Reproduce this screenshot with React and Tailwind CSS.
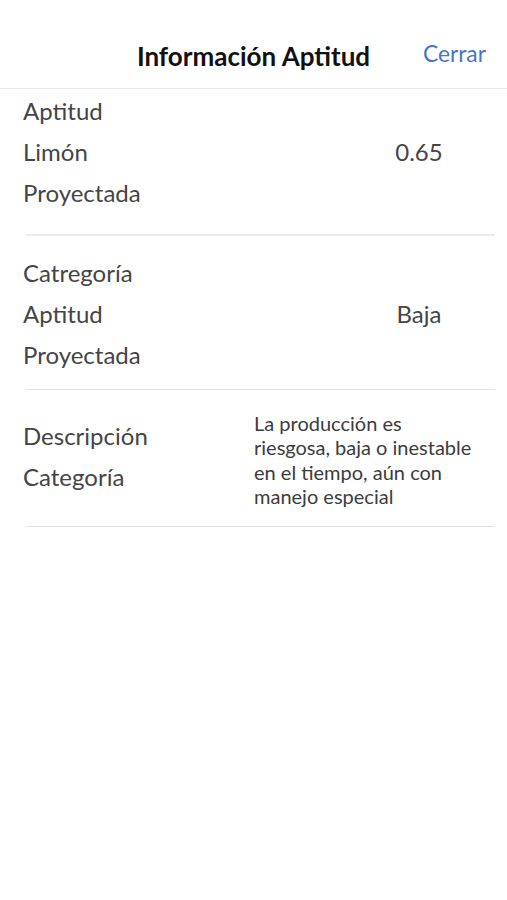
import React from "react";

export default function App() {
  const font = { fontFamily: "Lato, 'Noto Sans', sans-serif" };
  return (
    <div className="w-[507px] h-[900px] bg-white text-[#454545]" style={font}>
      <div className="relative h-[89px] border-b border-[#ececec] flex items-end justify-center pb-[19px]">
        <div className="text-[26px] font-bold text-[#111] leading-none">Información Aptitud</div>
        <div className="absolute right-[21px] top-[42px] text-[22.8px] leading-none text-[#4a75c2]">Cerrar</div>
      </div>

      <div className="flex items-center pt-[1px] pb-[21px]">
        <div className="w-[254px] pl-[23px] text-[24px] leading-[41px]">
          <div>Aptitud</div>
          <div>Limón</div>
          <div>Proyectada</div>
        </div>
        <div className="ml-[89px] w-[152px] text-center text-[24px] leading-[41px]">0.65</div>
      </div>
      <div className="ml-[26px] mr-[12px] h-[2px] bg-[#ececec]"></div>

      <div className="flex items-center pt-[16px] pb-[14px]">
        <div className="w-[254px] pl-[23px] text-[24px] leading-[41px]">
          <div>Catregoría</div>
          <div>Aptitud</div>
          <div>Proyectada</div>
        </div>
        <div className="ml-[89px] w-[152px] text-center text-[24px] leading-[41px]">Baja</div>
      </div>
      <div className="ml-[26px] mr-[12px] h-[1px] bg-[#e2e2e2]"></div>

      <div className="flex items-center pt-[21px] pb-[18px]">
        <div className="w-[254px] pl-[23px] pb-[7px] text-[24px] leading-[41px]">
          <div>Descripción</div>
          <div>Categoría</div>
        </div>
        <div className="w-[225px] text-[20px] leading-[24.3px] text-[#3c3c3c]">
          La producción es riesgosa, baja o inestable en el tiempo, aún con manejo especial
        </div>
      </div>
      <div className="ml-[26px] mr-[12px] h-[1px] bg-[#e2e2e2]"></div>
    </div>
  );
}
